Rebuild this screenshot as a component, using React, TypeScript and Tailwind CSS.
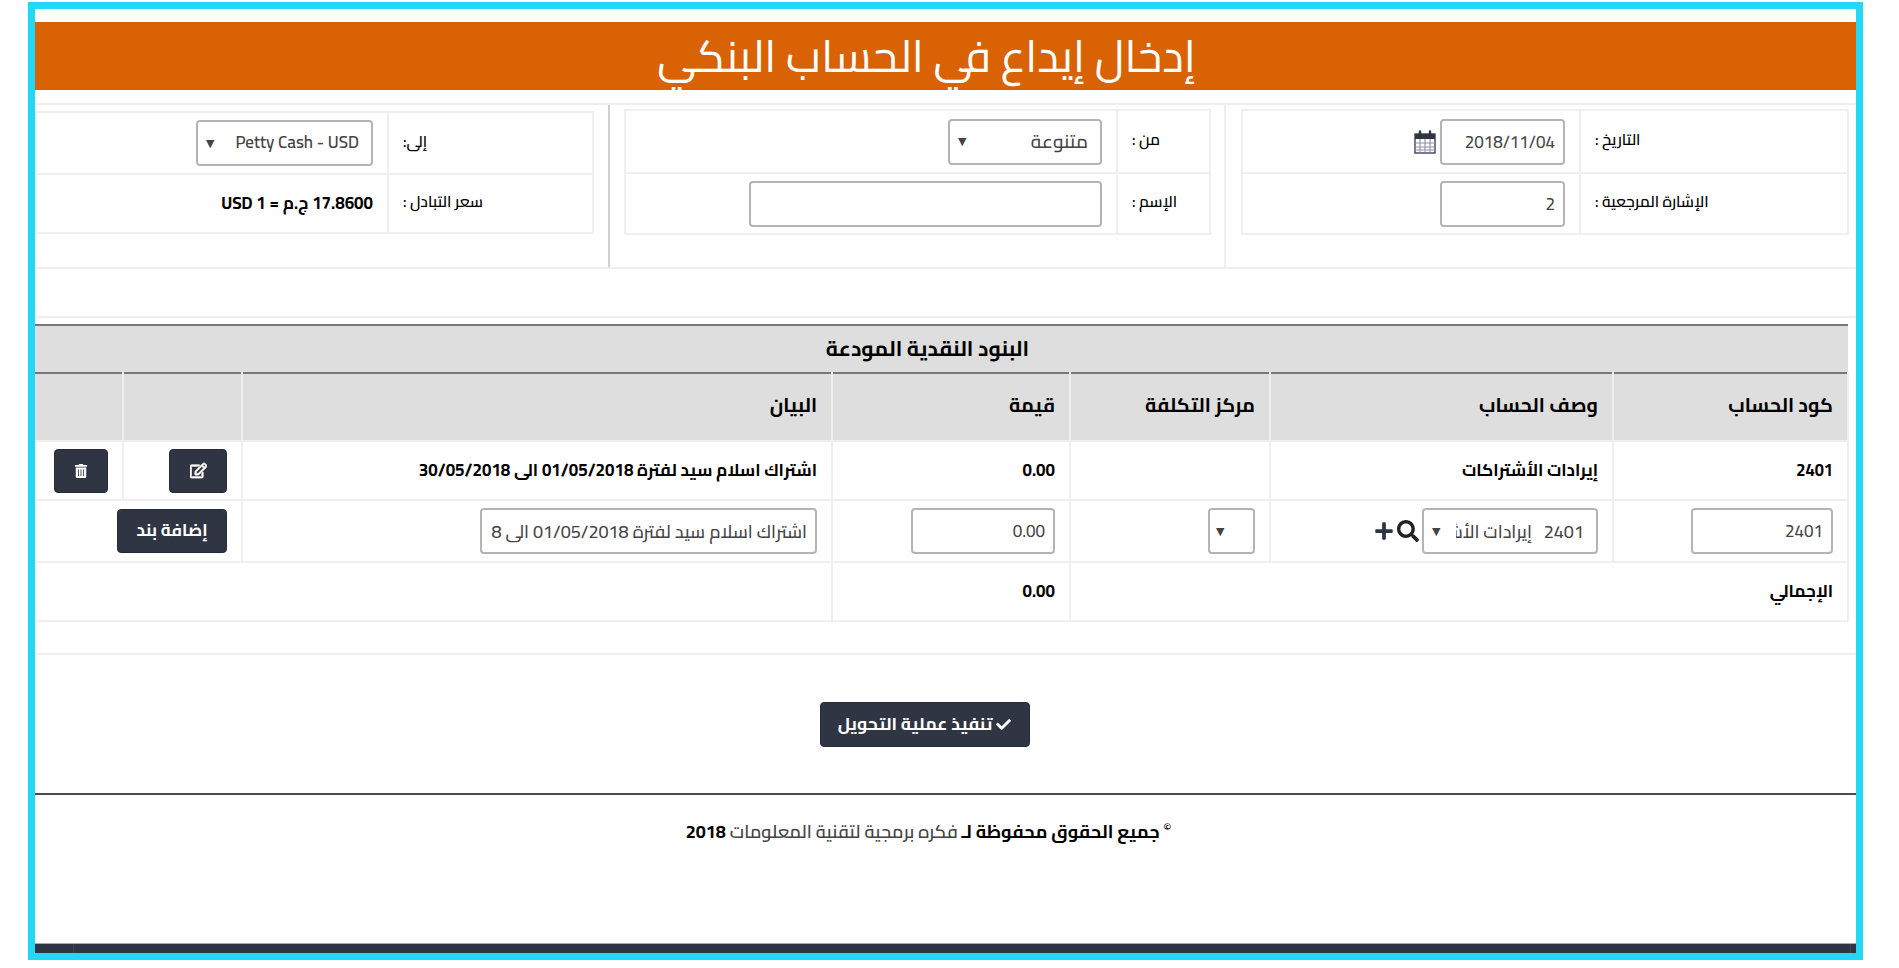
import React from "react";
import { FaCheck, FaPlus, FaRegEdit, FaSearch, FaTrashAlt } from "react-icons/fa";

const font = "font-['Cairo','Noto_Sans_Arabic','Noto_Sans','DejaVu_Sans',sans-serif]";
const field = "h-[46px] rounded border-2 border-[#b4b4b4] bg-white text-[17px] font-medium text-[#444] outline-none";
const cellB = "border-2 border-[#efefef]";
const btn = "inline-flex items-center justify-center rounded border border-[#262b36] bg-[#2f3542] font-bold text-white";

function Arrow() {
  return <span className="text-[11px] leading-none text-[#444]">▼</span>;
}

function Calendar() {
  return (
    <svg width="22" height="24" viewBox="0 0 22 24" className="shrink-0">
      <rect x="1" y="4" width="20" height="19" fill="#fff" stroke="#3b4252" strokeWidth="1.4" />
      <rect x="1" y="4" width="20" height="5" fill="#2f3542" />
      <path d="M6 1.5v5M16 1.5v5" stroke="#2f3542" strokeWidth="2.4" strokeLinecap="round" />
      <path d="M6 9v14M11 9v14M16 9v14" stroke="#8a7fa8" strokeWidth="1" />
      <path d="M1 13h20M1 17h20M1 20h20" stroke="#8a94a8" strokeWidth="1" />
    </svg>
  );
}

function FormTable({ label, className, rows }: { label: number; className: string; rows: [string, React.ReactNode, number][] }) {
  return (
    <table className={`table-fixed border-collapse ${className}`}>
      <colgroup>
        <col style={{ width: label }} />
        <col />
      </colgroup>
      <tbody>
        {rows.map(([l, c, h]) => (
          <tr key={l} style={{ height: h }}>
            <td className={`${cellB} pr-3 pb-[3px] pl-[14px] text-left align-middle text-[15.5px] font-semibold text-black`}>
              <span dir="rtl" className="inline-block">{l}</span>
            </td>
            <td className={`${cellB} pr-[14px] align-middle`}>{c}</td>
          </tr>
        ))}
      </tbody>
    </table>
  );
}

export default function App() {
  const head = ["كود الحساب", "وصف الحساب", "مركز التكلفة", "قيمة", "البيان", "", ""];
  const desc = "اشتراك اسلام سيد لفترة 01/05/2018 الى 30/05/2018";
  const td = `${cellB} px-[14px] text-right align-middle text-[17px] font-bold text-black`;
  return (
    <div dir="rtl" className={`h-[968px] overflow-hidden bg-white pt-[2px] ${font}`}>
      <div className="mr-auto ml-[28px] box-border flex h-[958px] w-[1835px] flex-col overflow-hidden border-[7px] border-[#22d8f5] bg-white">
        <h1 className="mt-[13px] flex h-[68px] shrink-0 items-center justify-center bg-[#d96205] pr-[38px] text-[44.5px] font-normal leading-none text-white">
          إدخال إيداع في الحساب البنكي
        </h1>

        <div className="mt-[13px] grid h-[166px] shrink-0 grid-cols-[630px_618px_573px] border-y-2 border-[#efefef]">
          <div className="pt-[4px] pr-[7px] pl-[15px]">
            <FormTable
              label={268}
              className="w-[608px]"
              rows={[
                [
                  "التاريخ :",
                  <div className="flex items-center gap-1">
                    <input readOnly defaultValue="2018/11/04" className={`${field} w-[125px] px-2 text-right`} />
                    <Calendar />
                  </div>,
                  63,
                ],
                ["الإشارة المرجعية :", <input readOnly defaultValue="2" className={`${field} w-[125px] px-2 text-right`} />, 61],
              ]}
            />
          </div>
          <div className="border-x-2 border-r-[#efefef] border-l-[#cfcfcf] pt-[4px] pr-[13px] pl-4">
            <FormTable
              label={93}
              className="w-[587px]"
              rows={[
                [
                  "من :",
                  <div className={`${field} flex w-[154px] items-center justify-between pr-3 pl-2`}>
                    <span className="text-[19px]">متنوعة</span>
                    <Arrow />
                  </div>,
                  63,
                ],
                ["الإسم :", <input readOnly className={`${field} w-[353px]`} />, 61],
              ]}
            />
          </div>
          <div className="pt-[6px] pr-[14px]">
            <FormTable
              label={205}
              className="w-[559px]"
              rows={[
                [
                  "إلى:",
                  <div className={`${field} flex w-[177px] items-center justify-between pr-3 pl-2`}>
                    <span dir="ltr" className="text-[17px] font-semibold">Petty Cash - USD</span>
                    <Arrow />
                  </div>,
                  62,
                ],
                ["سعر التبادل :", <span className="text-[17px] font-bold text-black">17.8600 ج.م = USD 1</span>, 59],
              ]}
            />
          </div>
        </div>

        <div className="mt-[47px] h-[2px] shrink-0 bg-[#efefef]" />

        <div className="mt-[6px] shrink-0 pr-[7px]">
          <table className="w-[1814px] table-fixed border-collapse">
            <colgroup>
              {[235, 343, 200, 238, 590, 119, 89].map((w, i) => (
                <col key={i} style={{ width: w }} />
              ))}
            </colgroup>
            <thead>
              <tr className="h-[48px] border-y-2 border-[#777] bg-[#dedede]">
                <th colSpan={7} className="pr-[27px] text-center text-[21px] font-bold text-black">البنود النقدية المودعة</th>
              </tr>
              <tr className="h-[68px] border-b-2 border-[#b9b9b9] bg-[#dedede]">
                {head.map((h, i) => (
                  <th key={i} className="border-x-2 border-[#efefef] px-[14px] pb-[2px] text-right text-[19.5px] font-bold text-black">{h}</th>
                ))}
              </tr>
            </thead>
            <tbody>
              <tr className="h-[59px]">
                <td className={`${td} !text-[16.5px]`}>2401</td>
                <td className={td}>إيرادات الأشتراكات</td>
                <td className={td} />
                <td className={td}>0.00</td>
                <td className={td}>{desc}</td>
                <td className={td}>
                  <button className={`${btn} h-[44px] w-[58px] text-[17px]`} aria-label="edit"><FaRegEdit stroke="currentColor" strokeWidth={24} /></button>
                </td>
                <td className={td}>
                  <button className={`${btn} h-[44px] w-[54px] text-[14px]`} aria-label="delete"><FaTrashAlt /></button>
                </td>
              </tr>
              <tr className="h-[62px]">
                <td className={td}>
                  <input readOnly defaultValue="2401" className={`${field} w-[142px] px-2 text-right`} />
                </td>
                <td className={td}>
                  <div className="flex items-center gap-[3px]">
                    <div className={`${field} flex w-[176px] shrink-0 items-center justify-between pr-3 pl-2 !text-[18px]`}>
                      <span className="w-[128px] overflow-hidden whitespace-pre text-right">2401   إيرادات الأشتراكات</span>
                      <Arrow />
                    </div>
                    <FaSearch className="size-[22px] text-[#222]" />
                    <FaPlus className="size-[20px] text-[#2f3542]" />
                  </div>
                </td>
                <td className={td}>
                  <div className={`${field} flex w-[47px] items-center justify-end pl-[6px]`}>
                    <Arrow />
                  </div>
                </td>
                <td className={td}>
                  <input readOnly defaultValue="0.00" className={`${field} w-[144px] px-2 text-right`} />
                </td>
                <td className={td}>
                  <input readOnly defaultValue={desc} className={`${field} w-[337px] px-2 text-right !text-[18px]`} />
                </td>
                <td colSpan={2} className={td}>
                  <button className={`${btn} h-[44px] w-[110px] text-[17px]`}>إضافة بند</button>
                </td>
              </tr>
              <tr className="h-[59px]">
                <td colSpan={3} className={td}>الإجمالي</td>
                <td className={td}>0.00</td>
                <td colSpan={3} className={td} />
              </tr>
            </tbody>
          </table>
        </div>

        <div className="mt-[31px] h-[2px] shrink-0 bg-[#efefef]" />

        <div className="mt-[47px] flex shrink-0 justify-center pr-[42px]">
          <button className={`${btn} h-[45px] w-[210px] gap-1 text-[17.5px]`}>
            <FaCheck className="size-[15px]" />
            تنفيذ عملية التحويل
          </button>
        </div>

        <div className="mt-[46px] h-[2px] shrink-0 bg-[#4a4a4a]" />

        <p className="mt-[23px] shrink-0 pr-[34px] text-center text-[18px] font-bold text-black">
          <sup className="text-[12px]">©</sup> جميع الحقوق محفوظة لـ <span className="font-semibold text-[#444]">فكره برمجية لتقنية المعلومات</span> 2018
        </p>

        <div className="mt-auto flex h-[10px] shrink-0 border-t border-[#a9a9a9] bg-[#2f3542]">
          <div className="w-[6px] border-l border-[#3e4452]" />
          <div className="flex-1" />
          <div className="w-[39px] border-r border-[#3e4452]" />
        </div>
      </div>
    </div>
  );
}
